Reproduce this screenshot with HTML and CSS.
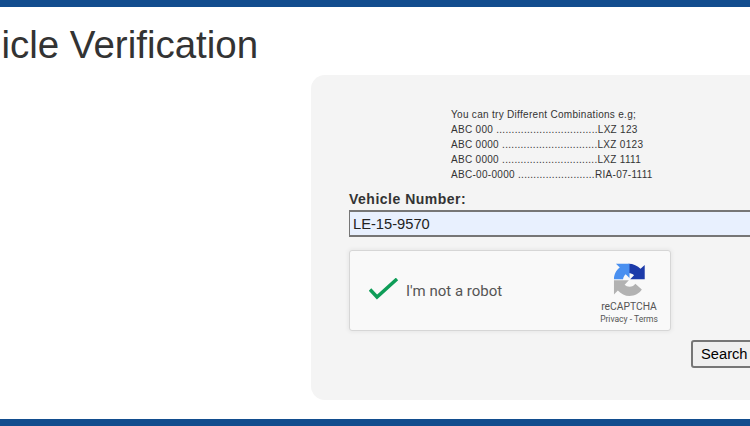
FILE: index.html
```html
<!DOCTYPE html>
<html lang="en">
<head>
  <meta charset="UTF-8">
  <title>Vehicle Verification</title>
  <link rel="stylesheet" href="styles.css">
</head>
<body>

<div class="top-bar"></div>

<div class="content">
  <h1 class="page-title">Vehicle Verification</h1>

  <div class="search-panel">
    <div class="hints">
      <p>You can try Different Combinations e.g;</p>
      <p>ABC 000 .................................LXZ 123</p>
      <p>ABC 0000 ...............................LXZ 0123</p>
      <p>ABC 0000 ...............................LXZ 1111</p>
      <p>ABC-00-0000 .........................RIA-07-1111</p>
    </div>

    <label class="field-label" for="vehicle">Vehicle Number:</label>
    <input class="field-input" type="text" id="vehicle" value="LE-15-9570">

    <div class="captcha">
      <svg class="captcha-check" viewBox="0 0 30 22">
        <path d="M1 11.5 L8 19 L28 1" fill="none" stroke="#0f9d58" stroke-width="3.5"/>
      </svg>
      <span class="captcha-text">I'm not a robot</span>
      <div class="captcha-brand">
        <svg class="captcha-logo" viewBox="0 0 100 105">
          <path fill="#1c3aa9" d="M47 2 C62 2 75 8 84 18 L97 6 L97 50 L52 50 L64 38 C60 34 54 31 47 31 Z"/>
          <path fill="#4a90f0" d="M2 50 L30 50 C31 44 34 39 38 35 L50 46 L50 2 L8 2 L20 14 C9 22 2 35 2 50 Z"/>
          <path fill="#b2b2b2" d="M2 53 L2 97 L14 85 C24 96 36 102 50 102 C66 102 80 94 88 82 L68 64 C64 70 58 73 50 73 C44 73 39 71 35 67 L48 53 Z"/>
        </svg>
        <div class="captcha-name">reCAPTCHA</div>
        <div class="captcha-links">Privacy - Terms</div>
      </div>
    </div>

    <div class="actions">
      <button class="search-btn">Search</button>
    </div>
  </div>
</div>

<div class="bottom-bar"></div>

</body>
</html>
```

FILE: styles.css
```css
html, body {
  height: 100%;
  margin: 0;
  overflow: hidden;
}

body {
  display: flex;
  flex-direction: column;
  width: 1000px;
  font-family: "Liberation Sans", Arial, sans-serif;
  background-color: #fff;
  color: #333;
}

.top-bar, .bottom-bar {
  height: 7px;
  background-color: #124d8e;
  flex-shrink: 0;
}

.content {
  flex: 1;
  min-height: 0;
}

.page-title {
  margin: 17px 0 10px -65px;
  font-size: 38.5px;
  line-height: 41px;
  font-weight: 500;
}

.search-panel {
  box-sizing: border-box;
  width: 640px;
  height: 325px;
  margin-left: 311px;
  padding: 32px 38px 0;
  background-color: #f4f4f4;
  border-radius: 14px;
}

.hints {
  margin-left: 102px;
  margin-bottom: 9px;
  font-size: 10px;
  line-height: 15px;
  letter-spacing: 0.3px;
}

.hints p {
  margin: 0;
}

.field-label {
  display: block;
  font-size: 14px;
  font-weight: bold;
  line-height: 17px;
  letter-spacing: 0.5px;
  margin-bottom: 2px;
}

.field-input {
  display: block;
  box-sizing: border-box;
  width: 500px;
  height: 27px;
  padding: 0 3px;
  font-family: "Liberation Sans", Arial, sans-serif;
  font-size: 14.7px;
  color: #222;
  background-color: #e8f0fe;
  border: solid #767676;
  border-width: 1px 0 2px 1px;
  border-top-width: 2px;
}

.captcha {
  box-sizing: border-box;
  display: flex;
  align-items: center;
  width: 322px;
  height: 81px;
  margin-top: 13px;
  background-color: #f9f9f9;
  border: 1px solid #d6d6d6;
  border-radius: 3px;
  box-shadow: 0 0 4px 1px rgba(0, 0, 0, 0.06);
}

.captcha-check {
  width: 30px;
  height: 22px;
  margin-left: 19px;
  margin-bottom: 4px;
}

.captcha-text {
  margin-left: 7px;
  font-family: Roboto, sans-serif;
  font-size: 15px;
  color: #555;
}

.captcha-brand {
  align-self: flex-end;
  margin-left: auto;
  margin-right: 7px;
  margin-bottom: 4px;
  width: 68px;
  text-align: center;
  font-family: Roboto, sans-serif;
  color: #555;
}

.captcha-logo {
  display: block;
  width: 33px;
  height: 34px;
  margin: 0 auto 3px;
}

.captcha-name {
  font-size: 10.3px;
  line-height: 13px;
}

.captcha-links {
  font-size: 8.5px;
  line-height: 13px;
}

.actions {
  margin-top: 9px;
  margin-left: 342px;
}

.search-btn {
  height: 28px;
  width: 80px;
  padding: 0 0 0 8px;
  text-align: left;
  font-family: "Liberation Sans", Arial, sans-serif;
  font-size: 14.7px;
  color: #000;
  background-color: #efefef;
  border: 2px solid #767676;
  border-radius: 3px;
}
```
